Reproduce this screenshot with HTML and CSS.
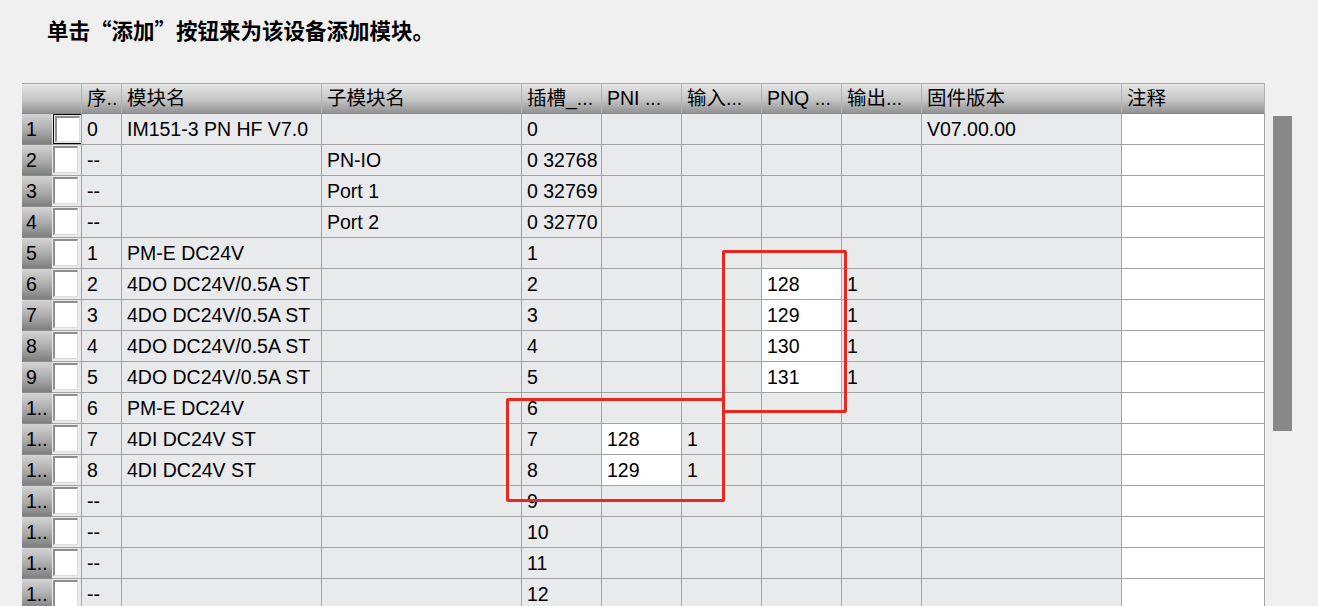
FILE: index.html
```html
<!DOCTYPE html>
<html>
<head>
  <meta charset="utf-8">
  <title>模块</title>
  <link rel="stylesheet" href="styles.css">
</head>
<body>
  <div class="title">单击“添加”按钮来为该设备添加模块。</div>
  <div class="area">
    <div class="pane">
      <table class="grid">
        <colgroup>
          <col class="c-num"><col class="c-chk"><col class="c-seq"><col class="c-wide"><col class="c-wide">
          <col class="c-mid"><col class="c-mid"><col class="c-mid"><col class="c-mid"><col class="c-mid">
          <col class="c-wide"><col class="c-note">
        </colgroup>
        <tr>
          <th class="num"></th><th></th><th>序..</th><th>模块名</th><th>子模块名</th><th>插槽_...</th><th>PNI ...</th><th>输入...</th><th>PNQ ...</th><th>输出...</th><th>固件版本</th><th>注释</th>
        </tr>
        <tr>
          <td class="num">1</td><td class="cb"><span class="chk focus"><span></span></span></td><td>0</td><td>IM151-3 PN HF V7.0</td><td></td><td>0</td><td></td><td></td><td></td><td></td><td>V07.00.00</td><td class="w"></td>
        </tr>
        <tr>
          <td class="num">2</td><td class="cb"><span class="chk"></span></td><td>--</td><td></td><td>PN-IO</td><td>0 32768</td><td></td><td></td><td></td><td></td><td></td><td class="w"></td>
        </tr>
        <tr>
          <td class="num">3</td><td class="cb"><span class="chk"></span></td><td>--</td><td></td><td>Port 1</td><td>0 32769</td><td></td><td></td><td></td><td></td><td></td><td class="w"></td>
        </tr>
        <tr>
          <td class="num">4</td><td class="cb"><span class="chk"></span></td><td>--</td><td></td><td>Port 2</td><td>0 32770</td><td></td><td></td><td></td><td></td><td></td><td class="w"></td>
        </tr>
        <tr>
          <td class="num">5</td><td class="cb"><span class="chk"></span></td><td>1</td><td>PM-E DC24V</td><td></td><td>1</td><td></td><td></td><td></td><td></td><td></td><td class="w"></td>
        </tr>
        <tr>
          <td class="num">6</td><td class="cb"><span class="chk"></span></td><td>2</td><td>4DO DC24V/0.5A ST</td><td></td><td>2</td><td></td><td></td><td class="w">128</td><td>1</td><td></td><td class="w"></td>
        </tr>
        <tr>
          <td class="num">7</td><td class="cb"><span class="chk"></span></td><td>3</td><td>4DO DC24V/0.5A ST</td><td></td><td>3</td><td></td><td></td><td class="w">129</td><td>1</td><td></td><td class="w"></td>
        </tr>
        <tr>
          <td class="num">8</td><td class="cb"><span class="chk"></span></td><td>4</td><td>4DO DC24V/0.5A ST</td><td></td><td>4</td><td></td><td></td><td class="w">130</td><td>1</td><td></td><td class="w"></td>
        </tr>
        <tr>
          <td class="num">9</td><td class="cb"><span class="chk"></span></td><td>5</td><td>4DO DC24V/0.5A ST</td><td></td><td>5</td><td></td><td></td><td class="w">131</td><td>1</td><td></td><td class="w"></td>
        </tr>
        <tr>
          <td class="num">1..</td><td class="cb"><span class="chk"></span></td><td>6</td><td>PM-E DC24V</td><td></td><td>6</td><td></td><td></td><td></td><td></td><td></td><td class="w"></td>
        </tr>
        <tr>
          <td class="num">1..</td><td class="cb"><span class="chk"></span></td><td>7</td><td>4DI DC24V ST</td><td></td><td>7</td><td class="w">128</td><td>1</td><td></td><td></td><td></td><td class="w"></td>
        </tr>
        <tr>
          <td class="num">1..</td><td class="cb"><span class="chk"></span></td><td>8</td><td>4DI DC24V ST</td><td></td><td>8</td><td class="w">129</td><td>1</td><td></td><td></td><td></td><td class="w"></td>
        </tr>
        <tr>
          <td class="num">1..</td><td class="cb"><span class="chk"></span></td><td>--</td><td></td><td></td><td>9</td><td></td><td></td><td></td><td></td><td></td><td class="w"></td>
        </tr>
        <tr>
          <td class="num">1..</td><td class="cb"><span class="chk"></span></td><td>--</td><td></td><td></td><td>10</td><td></td><td></td><td></td><td></td><td></td><td class="w"></td>
        </tr>
        <tr>
          <td class="num">1..</td><td class="cb"><span class="chk"></span></td><td>--</td><td></td><td></td><td>11</td><td></td><td></td><td></td><td></td><td></td><td class="w"></td>
        </tr>
        <tr>
          <td class="num">1..</td><td class="cb"><span class="chk"></span></td><td>--</td><td></td><td></td><td>12</td><td></td><td></td><td></td><td></td><td></td><td class="w"></td>
        </tr>
      </table>
      <div class="mark mark-out"></div>
      <div class="mark mark-in"></div>
    </div>
    <div class="scroll"><div class="thumb"></div></div>
  </div>
</body>
</html>
```

FILE: styles.css
```css
html, body {height: 100%;
            overflow: hidden;}

body {margin: 0;
      background-color: #f0f0f0;
      color: #000000;
      font-family: "Liberation Sans", "Noto Sans CJK SC", sans-serif;}

.title {margin: 15px 0 0 47px;
        height: 30px;
        line-height: 30px;
        font-family: "Noto Sans CJK SC", sans-serif;
        font-size: 21.5px;
        font-weight: bold;}

.area {display: flex;
       align-items: flex-start;
       margin: 38px 0 0 22px;}

.pane {position: relative;}

.grid {width: 1243px;
       table-layout: fixed;
       border-collapse: separate;
       border-spacing: 0;
       font-size: 19.5px;
       line-height: 22px;}

.c-num {width: 30px;}
.c-chk {width: 30px;}
.c-seq {width: 40px;}
.c-wide {width: 200px;}
.c-mid {width: 80px;}
.c-note {width: 143px;}

.grid th {box-sizing: content-box;
          height: 27px;
          padding: 0 5px 2px 5px;
          border-top: solid #a8a8a8 1px;
          border-bottom: solid #8a8a8a 1px;
          border-right: solid #b4b4b4 1px;
          background: linear-gradient(#e6e6e6, #c4c4c4 55%, #929292);
          text-align: left;
          font-weight: normal;
          white-space: nowrap;
          overflow: hidden;}

.grid td {box-sizing: content-box;
          height: 30px;
          padding: 0 5px;
          border-bottom: solid #a4a4a4 1px;
          border-right: solid #a4a4a4 1px;
          background-color: #e9eaec;
          white-space: nowrap;
          overflow: hidden;}

.grid th.num, .grid td.num {padding: 0 0 0 4px;
                            border-right: none;
                            border-bottom: solid #8c8c8c 1px;
                            background: linear-gradient(#d4d4d4, #aaaaaa 55%, #7e7e7e);}

.grid th.num {padding-bottom: 2px;
              border-bottom: solid #8a8a8a 1px;
              background: linear-gradient(#e6e6e6, #c4c4c4 55%, #929292);}

.grid td.cb {padding: 0 0 0 1px;
             vertical-align: top;}

.grid td.w {background-color: #ffffff;}

.chk {display: block;
      box-sizing: border-box;
      width: 25px;
      height: 27px;
      margin-top: 1px;
      border-top: solid #8e8e8e 2px;
      border-left: solid #8e8e8e 2px;
      border-bottom: solid #dcdcdc 1px;
      border-right: solid #dcdcdc 1px;
      background-color: #ffffff;}

.chk.focus {width: 29px;
            height: 30px;
            margin-top: 0;
            padding: 1px;
            border: solid #000000 1px;
            background-color: #e9eaec;}

.chk.focus span {display: block;
                 box-sizing: border-box;
                 width: 25px;
                 height: 26px;
                 border-top: solid #8e8e8e 2px;
                 border-left: solid #8e8e8e 2px;
                 border-bottom: solid #dcdcdc 1px;
                 border-right: solid #dcdcdc 1px;
                 background-color: #ffffff;}

.mark {position: absolute;
       box-sizing: border-box;
       border: solid #e8271f 3px;
       border-radius: 2px;}

.mark-out {left: 700px;
           top: 167px;
           width: 125px;
           height: 163px;}

.mark-in {left: 484px;
          top: 315px;
          width: 219px;
          height: 104px;}

.scroll {width: 19px;
         margin-left: 8px;}

.thumb {margin-top: 33px;
        height: 315px;
        background-color: #888888;}
```
